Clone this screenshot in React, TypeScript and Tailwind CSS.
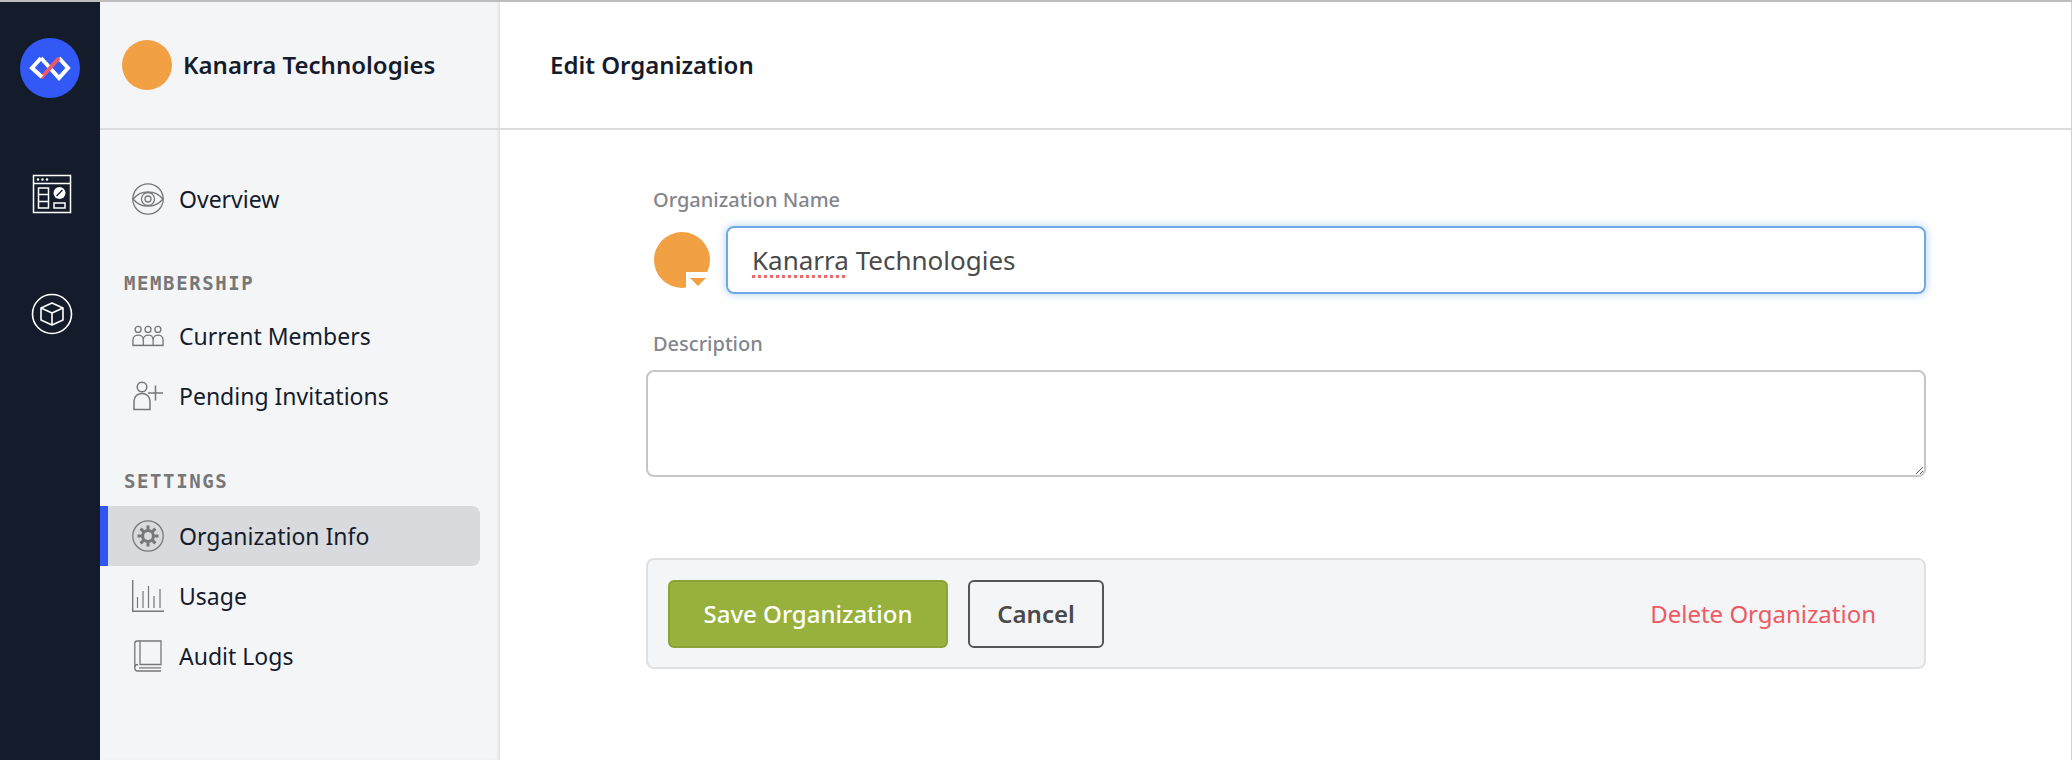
import React from "react";

const gray = "#777";

function Logo() {
  return (
    <svg width="60" height="60" viewBox="0 0 60 60">
      <circle cx="30" cy="30" r="30" fill="#3258f5" />
      <path d="M21 20 L39 40 L48 30 L39 20" fill="none" stroke="#fff" strokeWidth="4" strokeLinejoin="miter" />
      <path d="M39 20 L21 40" fill="none" stroke="#ee5a63" strokeWidth="4" />
      <path d="M22 39 L12 30 L21 20" fill="none" stroke="#fff" strokeWidth="4" strokeLinejoin="miter" />
    </svg>
  );
}

function DashIcon() {
  return (
    <svg width="40" height="40" viewBox="0 0 40 40" fill="none" stroke="#fff" strokeWidth="1.5">
      <rect x="1.5" y="1.5" width="37" height="37" />
      <path d="M1.5 9.5 H38.5" />
      <circle cx="6" cy="5.5" r="1.2" fill="#fff" stroke="none" />
      <circle cx="10.5" cy="5.5" r="1.2" fill="#fff" stroke="none" />
      <circle cx="15" cy="5.5" r="1.2" fill="#fff" stroke="none" />
      <rect x="6.5" y="14" width="10" height="20" />
      <path d="M6.5 20.5 H16.5 M6.5 27.5 H16.5" />
      <circle cx="27.5" cy="19" r="6" fill="#fff" stroke="none" />
      <path d="M24.5 22 L30.5 16" stroke="#141c2c" strokeWidth="1.5" />
      <rect x="22" y="29" width="11" height="5" />
    </svg>
  );
}

function CubeIcon() {
  return (
    <svg width="42" height="42" viewBox="0 0 42 42" fill="none" stroke="#fff" strokeWidth="1.6">
      <circle cx="21" cy="21" r="19.5" />
      <path d="M21 10 L32 15 V27 L21 32 L10 27 V15 Z" strokeLinejoin="round" />
      <path d="M10 15 L21 20 L32 15 M21 20 V32" strokeLinejoin="round" />
    </svg>
  );
}

function EyeIcon() {
  return (
    <svg width="32" height="32" viewBox="0 0 32 32" fill="none" stroke={gray} strokeWidth="1.3">
      <circle cx="16" cy="16" r="15.2" />
      <path d="M1 16 C9 6.5 23 6.5 31 16 C23 25.5 9 25.5 1 16 Z" />
      <circle cx="16" cy="16" r="6.5" />
      <circle cx="16" cy="16" r="3" />
    </svg>
  );
}

function MembersIcon() {
  return (
    <svg width="34" height="22" viewBox="0 0 34 22" fill="none" stroke={gray} strokeWidth="1.4">
      <circle cx="6.5" cy="4" r="3.2" />
      <circle cx="17" cy="4" r="3.2" />
      <circle cx="27.5" cy="4" r="3.2" />
      <path d="M1 21 V15 C1 8.5 12 8.5 12 15 V21" />
      <path d="M12 15 C12 8.5 22.5 8.5 22.5 15 V21" />
      <path d="M22.5 15 C22.5 8.5 33 8.5 33 15 V21" />
      <path d="M0.5 21 H33.5" strokeWidth="1.6" />
    </svg>
  );
}

function InviteIcon() {
  return (
    <svg width="32" height="30" viewBox="0 0 32 30" fill="none" stroke={gray} strokeWidth="1.5">
      <circle cx="10" cy="6" r="4.8" />
      <path d="M2 28.5 V20 C2 10 18 10 18 20 V28.5 Z" />
      <path d="M16 12 H31 M23.5 4.5 V19.5" />
    </svg>
  );
}

function GearIcon() {
  const teeth = [0, 45, 90, 135, 180, 225, 270, 315];
  return (
    <svg width="32" height="32" viewBox="0 0 32 32" fill="none" stroke={gray}>
      <circle cx="16" cy="16" r="15.2" strokeWidth="1.3" />
      <circle cx="16" cy="16" r="5.4" strokeWidth="3" />
      {teeth.map((a) => (
        <path key={a} d="M16 5.5 V9.5" strokeWidth="3" transform={`rotate(${a} 16 16)`} />
      ))}
    </svg>
  );
}

function UsageIcon() {
  return (
    <svg width="32" height="32" viewBox="0 0 32 32" fill="none" stroke={gray} strokeWidth="1.2">
      <path d="M0.7 0 V31.2 H32" strokeWidth="1.4" />
      <path d="M5.5 28 V17 M11 28 V11 M16.5 28 V6 M22 28 V16 M28 28 V9" />
    </svg>
  );
}

function BookIcon() {
  return (
    <svg width="28" height="32" viewBox="0 0 28 32" fill="none" stroke={gray} strokeWidth="1.3">
      <path d="M27 24.5 H6 V1 H27 Z" />
      <path d="M6 1 H3 C1.5 1 0.8 2 0.8 3.5 V28 C0.8 30 2 31 3.5 31 H27" />
      <path d="M0.8 27 C0.8 25.5 2 24.5 4 24.5 M5 27.8 H27" />
    </svg>
  );
}

function NavRow({ icon, label, active }: { icon: React.ReactNode; label: string; active?: boolean }) {
  return (
    <div
      className={
        active
          ? "flex h-[60px] w-[380px] items-center gap-[15px] rounded-r-lg border-l-8 border-[#3055f0] bg-[#d9dadd] pl-6"
          : "flex h-[60px] w-[380px] items-center gap-[15px] rounded-r-lg border-l-8 border-transparent pl-6"
      }
    >
      <span className="flex w-8 items-center justify-center">{icon}</span>
      <span className="text-[23px] leading-none text-[#141c2c]">{label}</span>
    </div>
  );
}

function SectionLabel({ children, className }: { children: string; className: string }) {
  return (
    <div
      className={
        "h-7 pl-6 font-['DejaVu_Sans_Mono',monospace] text-[19px] leading-7 font-bold tracking-[1.6px] text-[#777] " +
        className
      }
    >
      {children}
    </div>
  );
}

export default function App() {
  return (
    <div className="flex h-[760px] w-[2072px] flex-col overflow-hidden border-t-2 border-[#bdbdbd] bg-white font-['Noto_Sans',sans-serif]">
      <div className="flex min-h-0 flex-1">
        <aside className="flex w-[100px] shrink-0 flex-col items-center bg-[#141c2c] pt-9">
          <Logo />
          <div className="mt-[76px] ml-1">
            <DashIcon />
          </div>
          <div className="mt-[79px] ml-1">
            <CubeIcon />
          </div>
        </aside>

        <nav className="w-[400px] shrink-0 bg-[#f4f5f7] shadow-[inset_-3px_0_3px_-1px_rgba(0,0,0,0.08)]">
          <div className="flex h-[128px] items-center gap-[11px] border-b-2 border-[#dcdcdc] pl-[22px]">
            <div className="h-[50px] w-[50px] rounded-full bg-[#f2a044]" />
            <div className="text-[24px] font-semibold text-[#141c2c]">Kanarra Technologies</div>
          </div>
          <div className="pt-[39px]">
            <NavRow icon={<EyeIcon />} label="Overview" />
            <SectionLabel className="mt-10 mb-[9px]">MEMBERSHIP</SectionLabel>
            <NavRow icon={<MembersIcon />} label="Current Members" />
            <NavRow icon={<InviteIcon />} label="Pending Invitations" />
            <SectionLabel className="mt-[41px] mb-[11px]">SETTINGS</SectionLabel>
            <NavRow icon={<GearIcon />} label="Organization Info" active />
            <NavRow icon={<UsageIcon />} label="Usage" />
            <NavRow icon={<BookIcon />} label="Audit Logs" />
          </div>
        </nav>

        <main className="flex min-w-0 flex-1 flex-col border-r border-[#d0d0d0]">
          <div className="flex h-[128px] shrink-0 items-center border-b-2 border-[#dcdcdc] pl-[50px]">
            <h1 className="text-[24px] font-semibold text-[#141c2c]">Edit Organization</h1>
          </div>
          <div className="ml-[146px] w-[1280px] pt-[56px]">
            <label className="block h-7 pl-[7px] text-[20px] leading-7 font-medium text-[#83868c]">Organization Name</label>
            <div className="mt-3 flex items-center gap-4 pl-2">
              <div className="relative h-14 w-14 shrink-0 rounded-full bg-[#f2a044]">
                <div className="absolute right-0 bottom-0 flex h-4 w-6 items-start justify-center bg-white pt-1.5">
                  <div className="h-0 w-0 border-x-[8px] border-t-[8px] border-x-transparent border-t-[#f2a044]" />
                </div>
              </div>
              <div className="flex h-[68px] flex-1 items-center rounded-lg border-2 border-[#6ea8e6] pl-6 text-[26px] text-[#4a4a4a] shadow-[0_0_8px_rgba(110,168,230,0.55)]">
                <span className="underline decoration-[#ee6a6a] decoration-dotted decoration-[3px] underline-offset-[5px]">Kanarra</span>
                <span>&nbsp;Technologies</span>
              </div>
            </div>
            <label className="mt-9 block h-7 pl-[7px] text-[20px] leading-7 font-medium text-[#83868c]">Description</label>
            <textarea className="mt-3 block h-[107px] w-full rounded-lg border-2 border-[#c6c6c6] bg-white" />
            <div className="mt-[81px] flex h-[111px] items-center rounded-lg border-2 border-[#e0e0e0] bg-[#f4f5f7] pr-12 pl-5">
              <button className="flex h-[68px] w-[280px] items-center justify-center rounded-md border-2 border-[#8aa338] bg-[#97b13c] text-[24px] font-medium text-white">
                Save Organization
              </button>
              <button className="ml-5 flex h-[68px] w-[136px] items-center justify-center rounded-md border-2 border-[#555] text-[24px] font-semibold text-[#4a4a4a]">
                Cancel
              </button>
              <button className="ml-auto text-[24px] text-[#ee5a63]">Delete Organization</button>
            </div>
          </div>
        </main>
      </div>
    </div>
  );
}
